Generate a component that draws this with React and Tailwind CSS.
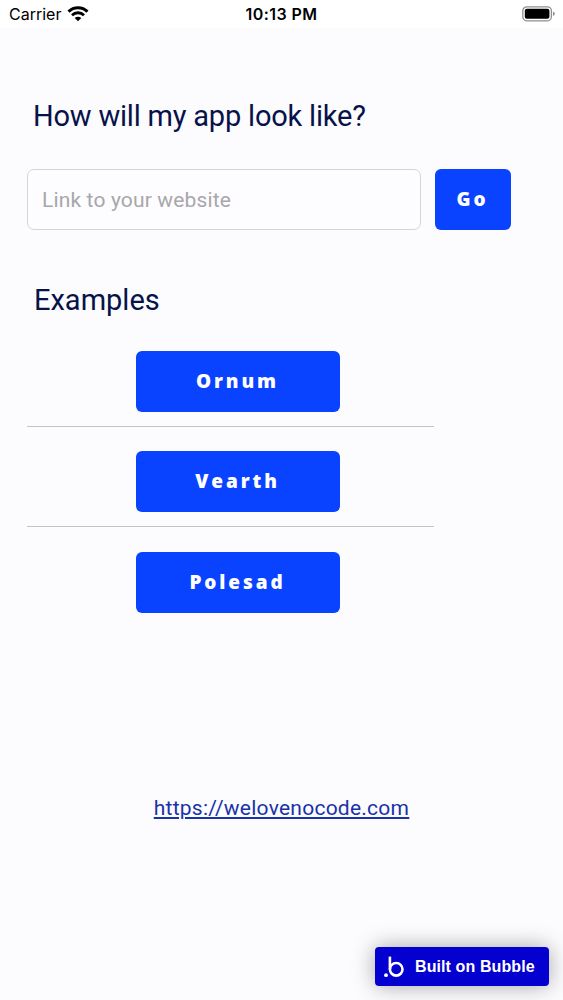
import React from 'react';

const examples = ['Ornum', 'Vearth', 'Polesad'];

const WifiIcon = () => (
  <svg width="22" height="16" viewBox="0 0 22 16" fill="none" stroke="#000" strokeWidth="2.9">
    <path d="M1.5 5.6C6.8 .4 15.2 .4 20.5 5.6" />
    <path d="M5 9.2C8.4 6 13.6 6 17 9.2" />
    <path d="M11 15.2L7.7 12C9.5 10.3 12.5 10.3 14.3 12Z" fill="#000" stroke="none" />
  </svg>
);

const BatteryIcon = () => (
  <svg width="34" height="16" viewBox="0 0 34 16">
    <rect x=".8" y=".8" width="28.6" height="14" rx="4" fill="none" stroke="#8f8f8f" strokeWidth="1.3" />
    <rect x="2.8" y="2.8" width="24.6" height="10" rx="2" fill="#000" />
    <path d="M31 5.6C33.4 6.4 33.4 9.2 31 10Z" fill="#8f8f8f" />
  </svg>
);

const BubbleLogo = () => (
  <svg width="20" height="22" viewBox="0 0 20 22" fill="none">
    <circle cx="12.2" cy="13.3" r="6.3" stroke="#fff" strokeWidth="2.6" />
    <path d="M5.9 .6v12.7" stroke="#fff" strokeWidth="2.6" />
    <circle cx="2" cy="19.2" r="1.9" fill="#fff" />
  </svg>
);

const StatusBar = () => (
  <header className="grid h-7 grid-cols-3 items-center bg-white pl-[9px] pr-[9px] font-['Inter',sans-serif] text-black">
    <div className="flex items-center gap-1.5">
      <span className="text-[16px]">Carrier</span>
      <WifiIcon />
    </div>
    <span className="text-center text-[16px] font-semibold tracking-[0.45px]">10:13 PM</span>
    <div className="-mr-0.5 flex justify-end">
      <BatteryIcon />
    </div>
  </header>
);

const Button = ({ label, className }) => (
  <button
    type="button"
    className={`h-[61px] rounded-[6px] bg-[#0a43ff] font-['Open_Sans',sans-serif] text-[19px] font-extrabold tracking-[2.9px] text-white ${className}`}
  >
    {label}
  </button>
);

const App = () => (
  <div className="flex h-[1000px] w-[563px] flex-col overflow-hidden bg-[#fcfbfd] font-['Roboto',sans-serif]">
    <StatusBar />

    <main className="flex flex-1 flex-col px-[27px]">
      <h1 className="mt-[68px] pl-1.5 text-[29px] leading-10 tracking-[-0.2px] text-[#07124a]">
        How will my app look like?
      </h1>

      {/* Website form */}
      <form className="mt-[33px] flex gap-[13.5px]">
        <input
          type="text"
          placeholder="Link to your website"
          className="h-[61px] w-[394px] rounded-[7px] border border-[#d5d4d9] bg-[#fdfcff] px-3.5 text-[21px] tracking-[0.15px] placeholder:text-[#a8a7aa]"
        />
        <Button label="Go" className="w-[76px]" />
      </form>

      <h2 className="mt-[50px] pl-[7px] text-[29px] leading-10 text-[#07124a]">Examples</h2>

      <ul className="mt-[17px] w-[407px]">
        {examples.map((name) => (
          <li
            key={name}
            className="mt-[24.5px] flex h-[76px] justify-center border-b-[1.5px] border-[#c4c3c7] pl-[14px] first:mt-[13.5px] last:border-0"
          >
            <Button label={name} className="w-[204px]" />
          </li>
        ))}
      </ul>

      <a
        href="https://welovenocode.com"
        className="mt-[164px] self-center text-[21px] leading-8 tracking-[0.25px] text-[#1832a8] underline"
      >
        https://welovenocode.com
      </a>
    </main>

    <footer className="flex justify-end pb-3.5 pr-3.5">
      <div className="flex h-[39px] w-[174px] items-center rounded-[4px] bg-[#0400d0] pl-[9px] font-['Liberation_Sans',sans-serif] text-[16px] font-bold text-white shadow-[0_0_22px_rgba(0,0,0,0.35)]">
        <BubbleLogo />
        <span className="ml-[11px] tracking-[0.1px]">Built on Bubble</span>
      </div>
    </footer>
  </div>
);

export default App;
